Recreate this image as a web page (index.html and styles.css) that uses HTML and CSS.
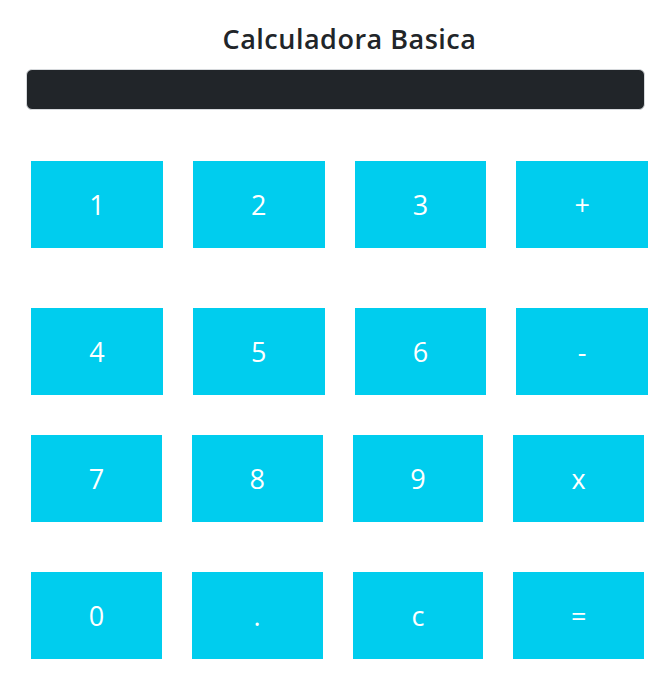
FILE: index.html
```html
<!DOCTYPE html>
<html lang="es">
<head>
<meta charset="utf-8">
<title>Calculadora Basica</title>
<link rel="stylesheet" href="styles.css">
</head>
<body>
<main class="calc">
  <h1 class="title">Calculadora Basica</h1>
  <div class="display"></div>
  <div class="keys keys-top">
    <button class="key">1</button>
    <button class="key">2</button>
    <button class="key">3</button>
    <button class="key">+</button>
    <button class="key">4</button>
    <button class="key">5</button>
    <button class="key">6</button>
    <button class="key">-</button>
  </div>
  <div class="keys keys-bottom">
    <button class="key">7</button>
    <button class="key">8</button>
    <button class="key">9</button>
    <button class="key">x</button>
    <button class="key">0</button>
    <button class="key">.</button>
    <button class="key">c</button>
    <button class="key">=</button>
  </div>
</main>
</body>
</html>
```
FILE: styles.css
```css
html, body {
  margin: 0;
  padding: 0;
  background: #ffffff;
}

.calc {
  padding-top: 23px;
  font-family: "Open Sans", "Noto Sans", sans-serif;
  color: #212529;
}

.title {
  margin: 0 0 0 30px;
  font-size: 27px;
  line-height: 32px;
  font-weight: 600;
  letter-spacing: 0.5px;
  text-align: center;
}

.display {
  margin: 14px 24px 0 26px;
  height: 41px;
  box-sizing: border-box;
  background: #212529;
  border: 1px solid #d6d9dc;
  border-radius: 6px;
}

.keys {
  display: grid;
  grid-template-columns: repeat(4, 1fr);
  column-gap: 30px;
  margin-left: 31px;
}

.keys-top {
  width: 617px;
  margin-top: 51px;
  row-gap: 60px;
}

.keys-bottom {
  width: 613px;
  margin-top: 40px;
  row-gap: 50px;
}

.key {
  height: 87px;
  border: 0;
  border-radius: 0;
  padding: 0;
  background: #00cdee;
  color: #ffffff;
  font-family: "Open Sans", "Noto Sans", sans-serif;
  font-size: 27px;
  line-height: 1;
}
```
